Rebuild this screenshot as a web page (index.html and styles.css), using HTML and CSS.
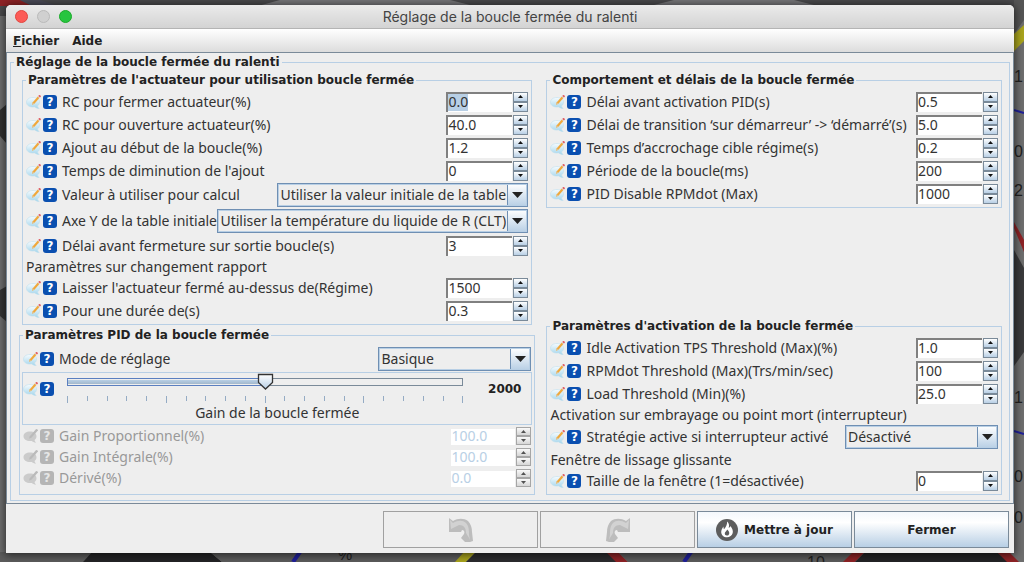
FILE: index.html
```html
<!DOCTYPE html>
<html lang="fr">
<head>
  <meta charset="utf-8">
  <title>Réglage de la boucle fermée du ralenti</title>
  <link rel="stylesheet" href="styles.css">
</head>
<body>
  <!-- Shared icons -->
  <svg class="sprites" aria-hidden="true">
    <defs>
      <linearGradient id="bubble" x1="0" y1="0" x2="0" y2="1">
        <stop offset="0" stop-color="#f6fbfe"/>
        <stop offset="1" stop-color="#a5d6ec"/>
      </linearGradient>
      <symbol id="note" viewBox="0 0 16 16">
        <path d="M7 3.500c3.800 0 6.500 1.800 6.500 4.700 0 1.700-.8 2.900-2 3.700.2 1.100.9 1.900 1.700 2.500-1.900.1-3.300-.5-4.300-1.500-4.400.8-8.400-1-8.400-4.600C.5 5.400 3.200 3.500 7 3.500z" fill="url(#bubble)" stroke="#bfdfee" stroke-width=".6"/>
        <path d="M6 10.800l.8-2.600 5-5.600 1.600 1.400-5 5.700z" fill="#f0a83c"/>
        <path d="M6 10.800l.8-2.600 1.600 1.500z" fill="#e2c391"/>
        <path d="M11.800 2.600l.5-.6 1.700 1.400-.6.600z" fill="#d8dde2"/>
        <path d="M12.300 2l.8-1c.6-.4 2.100.8 1.800 1.500L14 3.400z" fill="#e0575c"/>
      </symbol>
      <symbol id="note-off" viewBox="0 0 16 16">
        <path d="M7 3.500c3.800 0 6.500 1.800 6.500 4.700 0 1.700-.8 2.900-2 3.700.2 1.100.9 1.900 1.700 2.500-1.900.1-3.300-.5-4.300-1.500-4.400.8-8.400-1-8.400-4.600C.5 5.400 3.200 3.500 7 3.500z" fill="#cbcbcb"/>
        <path d="M6 10.800l.8-2.600L13.100 1c.6-.4 2.100.8 1.800 1.500L8.400 9.700z" fill="#bababa"/>
      </symbol>
      <symbol id="turn" viewBox="0 0 26 26">
        <path d="M1 1l4 3c5-3 11-3 15 0 3 3 4 7 4 11l1 9-3 1h-5l-4-4 3-4c1-2 0-4-2-4l-1 2H1z" fill="#bdbdbd"/>
        <path d="M2 3l3 3c5-3 10-3 13 0 3 3 3 8 3 12l1 5c-1-3-3-5-4-7 0-5-2-8-7-8l-4 2-4 2z" fill="#d2d2d2"/>
      </symbol>
    </defs>
  </svg>

  <!-- Gauges of the dashboard behind the dialog -->
  <svg class="dashboard" viewBox="0 0 1024 562" preserveAspectRatio="none" aria-hidden="true">
    <rect width="1024" height="562" fill="#6e6e6e"/>
    <rect width="1024" height="16" fill="#4a4a4c"/>
    <path d="M0 0h20l12 6H0z" fill="#8e2326"/>
    <path d="M20 0h20l18 6H32z" fill="#4c4c58"/>
    <path d="M258 6l22-6h170l24 6zM650 6l24-6h120l24 6z" fill="#77777a"/>
    <path d="M0 110l7-6v40l-7-8z" fill="#303030"/>
    <path d="M0 290l7-4v36l-7-6z" fill="#363636"/>
    <path d="M1014 0h10v20l-10 14z" fill="#555"/>
    <path d="M1014 34l10-9v16l-10 10z" fill="#a9a41d"/>
    <path d="M1014 110l10 3M1014 431l10 3" stroke="#20209a" stroke-width="2"/>
    <path d="M1014 228l10 24v-12l-10-18z" fill="#8e2326"/>
    <path d="M1014 250l10 18v84l-10 14z" fill="#3a3a3c"/>
    <path d="M0 552h92l-9 10H0z" fill="#5c5c5c"/>
    <path d="M92 552h118l12 10H83z" fill="#242426"/>
    <path d="M210 552h256l-8 10H222z" fill="#5c5c5c"/>
    <path d="M300 552l-7 10" stroke="#20209a" stroke-width="4"/>
    <path d="M464 552h12l-10 10h-11z" fill="#a9a41d"/>
    <path d="M476 552h134l12 10H466z" fill="#2c2c2e"/>
    <path d="M606 552h12l10 10h-12z" fill="#8e2326"/>
    <path d="M618 552h244l-10 10H628z" fill="#5c5c5c"/>
    <path d="M691 552l-7 10" stroke="#20209a" stroke-width="4"/>
    <path d="M853 552h12l-10 10h-12z" fill="#8e2326"/>
    <path d="M865 552h132l12 10H855z" fill="#242426"/>
    <path d="M997 552h12l10 10h-12z" fill="#8e2326"/>
    <g class="scale">
      <text x="1014" y="82">1</text>
      <text x="1014" y="157">0</text>
      <text x="1014" y="196">2</text>
      <text x="1014" y="403">1</text>
      <text x="1014" y="482">0</text>
      <text x="1014" y="523">0</text>
      <text x="338" y="560">%</text>
      <text x="807" y="568">10</text>
    </g>
  </svg>

  <main class="window">
    <header class="titlebar">
      <div class="lights">
        <button class="light close" aria-label="Fermer la fenêtre"></button>
        <button class="light minimize" aria-label="Réduire" disabled></button>
        <button class="light zoom" aria-label="Agrandir"></button>
      </div>
      <h1>Réglage de la boucle fermée du ralenti</h1>
    </header>

    <nav class="menubar">
      <button><u>F</u>ichier</button>
      <button>Aide</button>
    </nav>

    <form class="content">
      <fieldset class="group outer">
        <legend>Réglage de la boucle fermée du ralenti</legend>
        <div class="columns">

          <div class="column">
            <fieldset class="group actuator">
              <legend>Paramètres de l'actuateur pour utilisation boucle fermée</legend>
              <div class="row">
                <button type="button" class="note" aria-label="Note"><svg><use href="#note"/></svg></button>
                <button type="button" class="help">?</button>
                <label for="close-duty">RC pour fermer actuateur(%)</label>
                <span class="spinner"><input id="close-duty" type="text" value="0.0"><button type="button" class="up" aria-label="Plus"></button><button type="button" class="down" aria-label="Moins"></button></span>
              </div>
              <div class="row">
                <button type="button" class="note" aria-label="Note"><svg><use href="#note"/></svg></button>
                <button type="button" class="help">?</button>
                <label for="open-duty">RC pour ouverture actuateur(%)</label>
                <span class="spinner"><input id="open-duty" type="text" value="40.0"><button type="button" class="up" aria-label="Plus"></button><button type="button" class="down" aria-label="Moins"></button></span>
              </div>
              <div class="row">
                <button type="button" class="note" aria-label="Note"><svg><use href="#note"/></svg></button>
                <button type="button" class="help">?</button>
                <label for="adder">Ajout au début de la boucle(%)</label>
                <span class="spinner"><input id="adder" type="text" value="1.2"><button type="button" class="up" aria-label="Plus"></button><button type="button" class="down" aria-label="Moins"></button></span>
              </div>
              <div class="row">
                <button type="button" class="note" aria-label="Note"><svg><use href="#note"/></svg></button>
                <button type="button" class="help">?</button>
                <label for="adder-decay">Temps de diminution de l'ajout</label>
                <span class="spinner"><input id="adder-decay" type="text" value="0"><button type="button" class="up" aria-label="Plus"></button><button type="button" class="down" aria-label="Moins"></button></span>
              </div>
              <div class="row tall">
                <button type="button" class="note" aria-label="Note"><svg><use href="#note"/></svg></button>
                <button type="button" class="help">?</button>
                <label for="calc-value">Valeur à utiliser pour calcul</label>
                <select id="calc-value"><option>Utiliser la valeur initiale de la table</option></select>
              </div>
              <div class="row tall">
                <button type="button" class="note" aria-label="Note"><svg><use href="#note"/></svg></button>
                <button type="button" class="help">?</button>
                <label for="y-axis">Axe Y de la table initiale</label>
                <select id="y-axis"><option>Utiliser la température du liquide de R (CLT)</option></select>
              </div>
              <div class="row">
                <button type="button" class="note" aria-label="Note"><svg><use href="#note"/></svg></button>
                <button type="button" class="help">?</button>
                <label for="close-delay">Délai avant fermeture sur sortie boucle(s)</label>
                <span class="spinner"><input id="close-delay" type="text" value="3"><button type="button" class="up" aria-label="Plus"></button><button type="button" class="down" aria-label="Moins"></button></span>
              </div>
              <p class="caption">Paramètres sur changement rapport</p>
              <div class="row">
                <button type="button" class="note" aria-label="Note"><svg><use href="#note"/></svg></button>
                <button type="button" class="help">?</button>
                <label for="hold-above">Laisser l'actuateur fermé au-dessus de(Régime)</label>
                <span class="spinner"><input id="hold-above" type="text" value="1500"><button type="button" class="up" aria-label="Plus"></button><button type="button" class="down" aria-label="Moins"></button></span>
              </div>
              <div class="row">
                <button type="button" class="note" aria-label="Note"><svg><use href="#note"/></svg></button>
                <button type="button" class="help">?</button>
                <label for="hold-time">Pour une durée de(s)</label>
                <span class="spinner"><input id="hold-time" type="text" value="0.3"><button type="button" class="up" aria-label="Plus"></button><button type="button" class="down" aria-label="Moins"></button></span>
              </div>
            </fieldset>

            <fieldset class="group pid">
              <legend>Paramètres PID de la boucle fermée</legend>
              <div class="row tall">
                <button type="button" class="note" aria-label="Note"><svg><use href="#note"/></svg></button>
                <button type="button" class="help">?</button>
                <label for="mode">Mode de réglage</label>
                <select id="mode" class="short"><option>Basique</option></select>
              </div>
              <div class="gain">
                <div class="gain-icons">
                  <button type="button" class="note" aria-label="Note"><svg><use href="#note"/></svg></button>
                  <button type="button" class="help">?</button>
                </div>
                <div class="gain-slider">
                  <input id="gain" type="range" min="0" max="4000" value="2000">
                  <div class="ticks">
                    <i></i><i></i><i></i><i></i><i></i><i></i><i></i>
                    <i></i><i></i><i></i><i></i><i></i><i></i><i></i>
                    <i></i><i></i><i></i><i></i><i></i><i></i><i></i>
                  </div>
                </div>
                <output for="gain">2000</output>
                <label for="gain">Gain de la boucle fermée</label>
              </div>
              <div class="row off">
                <button type="button" class="note" aria-label="Note" disabled><svg><use href="#note-off"/></svg></button>
                <button type="button" class="help" disabled>?</button>
                <label for="gain-p">Gain Proportionnel(%)</label>
                <span class="spinner"><input id="gain-p" type="text" value="100.0" disabled><button type="button" class="up" aria-label="Plus" disabled></button><button type="button" class="down" aria-label="Moins" disabled></button></span>
              </div>
              <div class="row off">
                <button type="button" class="note" aria-label="Note" disabled><svg><use href="#note-off"/></svg></button>
                <button type="button" class="help" disabled>?</button>
                <label for="gain-i">Gain Intégrale(%)</label>
                <span class="spinner"><input id="gain-i" type="text" value="100.0" disabled><button type="button" class="up" aria-label="Plus" disabled></button><button type="button" class="down" aria-label="Moins" disabled></button></span>
              </div>
              <div class="row off">
                <button type="button" class="note" aria-label="Note" disabled><svg><use href="#note-off"/></svg></button>
                <button type="button" class="help" disabled>?</button>
                <label for="gain-d">Dérivé(%)</label>
                <span class="spinner"><input id="gain-d" type="text" value="0.0" disabled><button type="button" class="up" aria-label="Plus" disabled></button><button type="button" class="down" aria-label="Moins" disabled></button></span>
              </div>
            </fieldset>
          </div>

          <div class="column">
            <fieldset class="group">
              <legend>Comportement et délais de la boucle fermée</legend>
              <div class="row">
                <button type="button" class="note" aria-label="Note"><svg><use href="#note"/></svg></button>
                <button type="button" class="help">?</button>
                <label for="pid-delay">Délai avant activation PID(s)</label>
                <span class="spinner"><input id="pid-delay" type="text" value="0.5"><button type="button" class="up" aria-label="Plus"></button><button type="button" class="down" aria-label="Moins"></button></span>
              </div>
              <div class="row">
                <button type="button" class="note" aria-label="Note"><svg><use href="#note"/></svg></button>
                <button type="button" class="help">?</button>
                <label for="crank-delay">Délai de transition ‘sur démarreur’ -&gt; ‘démarré’(s)</label>
                <span class="spinner"><input id="crank-delay" type="text" value="5.0"><button type="button" class="up" aria-label="Plus"></button><button type="button" class="down" aria-label="Moins"></button></span>
              </div>
              <div class="row">
                <button type="button" class="note" aria-label="Note"><svg><use href="#note"/></svg></button>
                <button type="button" class="help">?</button>
                <label for="target-ramp">Temps d’accrochage cible régime(s)</label>
                <span class="spinner"><input id="target-ramp" type="text" value="0.2"><button type="button" class="up" aria-label="Plus"></button><button type="button" class="down" aria-label="Moins"></button></span>
              </div>
              <div class="row">
                <button type="button" class="note" aria-label="Note"><svg><use href="#note"/></svg></button>
                <button type="button" class="help">?</button>
                <label for="interval">Période de la boucle(ms)</label>
                <span class="spinner"><input id="interval" type="text" value="200"><button type="button" class="up" aria-label="Plus"></button><button type="button" class="down" aria-label="Moins"></button></span>
              </div>
              <div class="row">
                <button type="button" class="note" aria-label="Note"><svg><use href="#note"/></svg></button>
                <button type="button" class="help">?</button>
                <label for="rpmdot-disable">PID Disable RPMdot (Max)</label>
                <span class="spinner"><input id="rpmdot-disable" type="text" value="1000"><button type="button" class="up" aria-label="Plus"></button><button type="button" class="down" aria-label="Moins"></button></span>
              </div>
            </fieldset>

            <fieldset class="group">
              <legend>Paramètres d'activation de la boucle fermée</legend>
              <div class="row">
                <button type="button" class="note" aria-label="Note"><svg><use href="#note"/></svg></button>
                <button type="button" class="help">?</button>
                <label for="tps-max">Idle Activation TPS Threshold (Max)(%)</label>
                <span class="spinner"><input id="tps-max" type="text" value="1.0"><button type="button" class="up" aria-label="Plus"></button><button type="button" class="down" aria-label="Moins"></button></span>
              </div>
              <div class="row">
                <button type="button" class="note" aria-label="Note"><svg><use href="#note"/></svg></button>
                <button type="button" class="help">?</button>
                <label for="rpmdot-max">RPMdot Threshold (Max)(Trs/min/sec)</label>
                <span class="spinner"><input id="rpmdot-max" type="text" value="100"><button type="button" class="up" aria-label="Plus"></button><button type="button" class="down" aria-label="Moins"></button></span>
              </div>
              <div class="row">
                <button type="button" class="note" aria-label="Note"><svg><use href="#note"/></svg></button>
                <button type="button" class="help">?</button>
                <label for="load-min">Load Threshold (Min)(%)</label>
                <span class="spinner"><input id="load-min" type="text" value="25.0"><button type="button" class="up" aria-label="Plus"></button><button type="button" class="down" aria-label="Moins"></button></span>
              </div>
              <p class="caption">Activation sur embrayage ou point mort (interrupteur)</p>
              <div class="row tall">
                <button type="button" class="note" aria-label="Note"><svg><use href="#note"/></svg></button>
                <button type="button" class="help">?</button>
                <label for="switch">Stratégie active si interrupteur activé</label>
                <select id="switch" class="short"><option>Désactivé</option></select>
              </div>
              <p class="caption">Fenêtre de lissage glissante</p>
              <div class="row">
                <button type="button" class="note" aria-label="Note"><svg><use href="#note"/></svg></button>
                <button type="button" class="help">?</button>
                <label for="window-size">Taille de la fenêtre (1=désactivée)</label>
                <span class="spinner"><input id="window-size" type="text" value="0"><button type="button" class="up" aria-label="Plus"></button><button type="button" class="down" aria-label="Moins"></button></span>
              </div>
            </fieldset>
          </div>

        </div>
      </fieldset>
    </form>

    <footer class="actions">
      <button disabled aria-label="Annuler">
        <svg width="26" height="26"><use href="#turn"/></svg>
      </button>
      <button disabled aria-label="Rétablir">
        <svg class="mirrored" width="26" height="26"><use href="#turn"/></svg>
      </button>
      <button>
        <svg width="22" height="22" viewBox="0 0 22 22">
          <circle cx="11" cy="11" r="11" fill="#5d5d5d"/>
          <path d="M11 2.500c2.500 2 2.300 4.300 1.700 6.500.9-.3 1.400-1 1.600-1.900 2 2.200 3 4.600 2.400 7-.6 2.500-2.900 4.200-5.700 4.200-3.400 0-5.800-2.300-5.800-5.300 0-2.200 1.300-3.600 2.200-5.400.2 1 .1 1.800.6 2.600C9.700 8.500 11.500 5.500 11 2.500z" fill="#fff"/>
          <path d="M11.200 10.500c1.400 1.500 2.300 2.700 2 4.200-.3 1.200-1.200 1.900-2.300 1.900-1.300 0-2.200-1-2.100-2.300.1-1.500 1.900-2.200 2.400-3.800z" fill="#5d5d5d"/>
        </svg>
        Mettre à jour
      </button>
      <button>Fermer</button>
    </footer>
  </main>

  <script>
    // First field is focused with its value selected, as when the dialog opens
    const first = document.getElementById('close-duty');
    first.focus();
    first.select();

    const gain = document.getElementById('gain');
    gain.addEventListener('input', () => {
      document.querySelector('output').value = gain.value;
    });
  </script>
</body>
</html>
```
FILE: styles.css
```css
* {
  box-sizing: border-box;
}
body {
  margin: 0;
  min-height: 100vh;
  padding: 5px 10px 9px 6px;
  display: flex;
  font-family: "Noto Sans", sans-serif;
  font-size: 14px;
  line-height: 18px;
  color: #333;
  background: #6e6e6e;
}
button, input, select {
  font: inherit;
  color: inherit;
  margin: 0;
}
button {
  padding: 0;
  border: none;
  background: none;
}
.sprites {
  position: absolute;
  width: 0;
  height: 0;
}
.dashboard {
  position: absolute;
  inset: 0;
  width: 100%;
  height: 100%;
}
.scale {
  font-family: "Liberation Sans", sans-serif;
  font-size: 16px;
  fill: #222;
}

/* Window */
.window {
  position: relative;
  flex: 1;
  display: flex;
  flex-direction: column;
  background: #eee;
  border-radius: 5px 5px 0 0;
  box-shadow: 0 1px 8px 1px rgba(0, 0, 0, 0.6);
}
.titlebar {
  display: grid;
  grid-template-columns: 1fr auto 1fr;
  align-items: center;
  height: 24px;
  border-bottom: 1px solid #b4b4b4;
  border-radius: 5px 5px 0 0;
  background: linear-gradient(#ebebeb, #d3d3d3);
}
.titlebar h1 {
  margin: 0;
  font-family: Inter, sans-serif;
  font-size: 14px;
  font-weight: 400;
  color: #444;
}
.lights {
  display: flex;
  gap: 9px;
  padding-left: 9px;
}
.light {
  width: 13px;
  height: 13px;
  border: 1px solid #e2463f;
  border-radius: 50%;
  background: #fc5b57;
}
.light.minimize {
  border-color: #bababa;
  background: #d0d0d0;
}
.light.zoom {
  border-color: #1aab29;
  background: #27c53f;
}
.menubar {
  display: flex;
  gap: 13px;
  height: 23px;
  padding: 0 7px;
  background: linear-gradient(#fff, #dcdcdc);
}
.menubar, legend, .actions, output {
  font-family: "DejaVu Sans", sans-serif;
  font-size: 12px;
  font-weight: 700;
  color: #222;
}

/* Groups */
.content {
  flex: 1;
  display: flex;
  padding: 1px 3px 2px;
  border: 1px solid #7a8a99;
}
.group {
  min-width: 0;
  margin: 0;
  padding: 2px 3px;
  border: 1px solid #b8cfe5;
}
legend {
  padding: 0 2px;
  line-height: 16px;
}
.outer {
  flex: 1;
  padding: 2px 7px 5px 8px;
}
.outer > legend {
  margin-left: -5px;
}
.columns {
  display: grid;
  grid-template-columns: 517fr 456fr;
  gap: 11px;
}
.column {
  display: flex;
  flex-direction: column;
  justify-content: space-between;
  gap: 2px;
  min-width: 0;
}
.actuator {
  margin: 0 3px;
}
.pid {
  padding: 3px 3px 6px;
}

/* Rows */
.row {
  display: flex;
  align-items: center;
  height: 23px;
}
.row.tall {
  height: 26px;
}
.row.off {
  height: 21px;
  color: #999;
}
.row label {
  flex: 1;
  min-width: 0;
  padding-left: 5px;
  white-space: nowrap;
}
.caption {
  margin: 0;
  line-height: 19px;
}
.note, .note svg {
  flex: none;
  display: block;
  width: 16px;
  height: 16px;
}
.help {
  flex: none;
  width: 14px;
  height: 14px;
  margin-left: 1px;
  border-radius: 3px;
  background: #0a4fb0;
  color: #fff;
  font-family: "DejaVu Sans", sans-serif;
  font-size: 12px;
  font-weight: 700;
  line-height: 14px;
}
.help:disabled {
  background: #b5b5b5;
  color: #e6e6e6;
}

/* Spinners */
.spinner {
  flex: none;
  display: grid;
  grid-template-columns: 66px 15px;
  grid-template-rows: 1fr 1fr;
  column-gap: 1px;
  width: 82px;
  height: 20px;
}
.spinner input {
  grid-row: 1 / 3;
  width: 100%;
  min-width: 0;
  padding: 0 0 1px;
  border: solid #808080;
  border-width: 2px 0 0 2px;
  border-radius: 0;
  outline: none;
  background: #fff;
}
.spinner input::selection {
  background: #b8cfe5;
  color: #333;
}
.spinner button {
  border: 1px solid #7a8a99;
  background: url("data:image/svg+xml,%3Csvg xmlns='http://www.w3.org/2000/svg' width='5' height='3'%3E%3Cpath d='M0 3L2.500 0 5 3z' fill='%23111'/%3E%3C/svg%3E") center no-repeat, linear-gradient(#fff, #b8cfe5);
}
.spinner .down {
  background: url("data:image/svg+xml,%3Csvg xmlns='http://www.w3.org/2000/svg' width='5' height='3'%3E%3Cpath d='M0 0L2.500 3 5 0z' fill='%23111'/%3E%3C/svg%3E") center no-repeat, linear-gradient(#fff, #b8cfe5);
}
.off .spinner {
  height: 18px;
}
.off .spinner input {
  border-color: #eee;
  color: #b8cfe5;
}
.off .spinner button {
  filter: grayscale(1);
  opacity: 0.7;
}

/* Drop-downs */
select {
  appearance: none;
  flex: none;
  height: 24px;
  padding: 0 21px 0 2px;
  border: 1px solid #6f8fb3;
  border-radius: 0;
  box-shadow: inset 0 0 0 1px #b8cfe5;
  background:
    url("data:image/svg+xml,%3Csvg xmlns='http://www.w3.org/2000/svg' width='11' height='6'%3E%3Cpath d='M0 0h11L5.500 6z' fill='%23222'/%3E%3C/svg%3E") right 4px center no-repeat,
    linear-gradient(#6f8fb3, #6f8fb3) right 19px center / 1px 100% no-repeat,
    linear-gradient(#fff, #b8cfe5) right / 19px 100% no-repeat,
    #eee;
}
select.short {
  width: 153px;
}

/* Gain slider */
.gain {
  display: grid;
  grid-template-columns: 36px 1fr 68px;
  grid-template-rows: 31px 20px;
  margin: 0 -1px;
  border: 1px solid #b8cfe5;
}
.gain-icons {
  display: flex;
  align-items: center;
}
.gain-slider {
  display: flex;
  flex-direction: column;
  justify-content: space-between;
  padding-left: 8px;
}
.gain input {
  appearance: none;
  width: 100%;
  height: 17px;
  background: linear-gradient(90deg, #5b7fc0 50%, #7a8a99 50%) center / 100% 8px no-repeat;
  outline: none;
}
.gain input::-webkit-slider-runnable-track {
  height: 17px;
  background:
    linear-gradient(#b8cfe5, #a3b8cc) 1px center / 50% 4px no-repeat,
    linear-gradient(#eee, #eee) 1px center / calc(100% - 2px) 6px no-repeat;
}
.gain input::-webkit-slider-thumb {
  appearance: none;
  width: 17px;
  height: 17px;
  background: url("data:image/svg+xml,%3Csvg xmlns='http://www.w3.org/2000/svg' width='17' height='17'%3E%3ClinearGradient id='g' x2='0' y2='1'%3E%3Cstop stop-color='%23fff'/%3E%3Cstop offset='1' stop-color='%23b8cfe5'/%3E%3C/linearGradient%3E%3Cpath d='M1.500 1.500h14v8l-7 6.500-7-6.500z' fill='url(%23g)' stroke='%23333' stroke-width='1.300'/%3E%3C/svg%3E") no-repeat;
}
.ticks {
  display: flex;
  justify-content: space-between;
  height: 8px;
}
.ticks i {
  width: 1px;
  height: 5px;
  background: #94abc4;
}
.ticks i:nth-child(5n + 1) {
  height: 7px;
}
.gain output {
  align-self: center;
  text-align: right;
  padding-right: 10px;
}
.gain > label {
  grid-column: 1 / 4;
  text-align: center;
}

/* Footer buttons */
.actions {
  display: flex;
  justify-content: flex-end;
  gap: 2px;
  padding: 7px 5px 5px 0;
}
.actions button {
  display: flex;
  align-items: center;
  justify-content: center;
  gap: 6px;
  width: 155px;
  height: 37px;
  border: 1px solid #7a8a99;
  background: linear-gradient(#f4f8fc, #fff 30%, #b8cfe5);
}
.actions button:disabled {
  border-color: #a0a0a0;
  background: #eee;
}
.mirrored {
  transform: scaleX(-1);
}
```
